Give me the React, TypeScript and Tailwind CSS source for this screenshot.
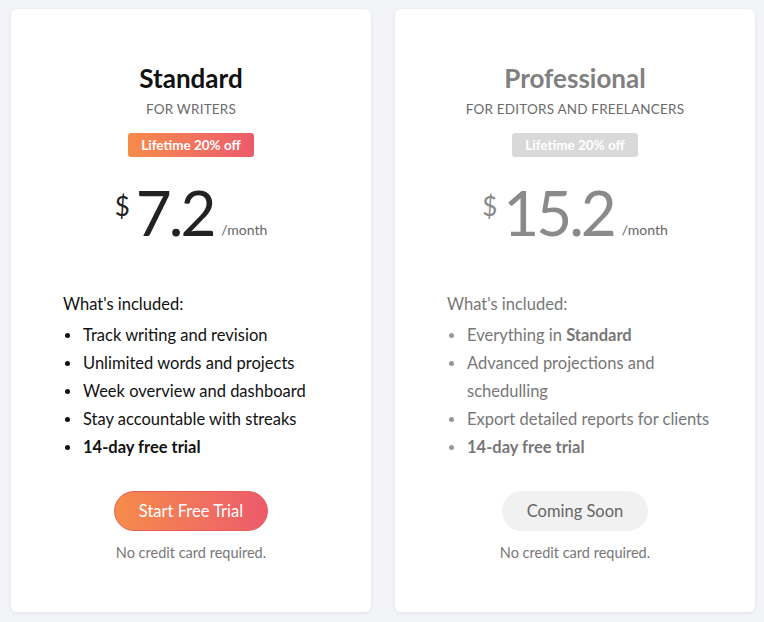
import React from 'react'

type Feature = { text: React.ReactNode; bold?: boolean }

type Plan = {
  name: string
  audience: string
  price: string
  features: Feature[]
  action: string
  active: boolean
}

const plans: Plan[] = [
  {
    name: 'Standard',
    audience: 'FOR WRITERS',
    price: '7.2',
    features: [
      { text: 'Track writing and revision' },
      { text: 'Unlimited words and projects' },
      { text: 'Week overview and dashboard' },
      { text: 'Stay accountable with streaks' },
      { text: '14-day free trial', bold: true },
    ],
    action: 'Start Free Trial',
    active: true,
  },
  {
    name: 'Professional',
    audience: 'FOR EDITORS AND FREELANCERS',
    price: '15.2',
    features: [
      {
        text: (
          <>
            Everything in <span className="font-bold">Standard</span>
          </>
        ),
      },
      { text: 'Advanced projections and schedulling' },
      { text: 'Export detailed reports for clients' },
      { text: '14-day free trial', bold: true },
    ],
    action: 'Coming Soon',
    active: false,
  },
]

const PlanCard: React.FC<{ plan: Plan }> = ({ plan }) => {
  const { active } = plan
  return (
    <div className="h-[603px] rounded-md bg-white shadow-[0_1px_4px_rgba(0,0,0,0.08)] flex flex-col items-center pt-[54px]">
      <h2 className={`text-[26px] leading-[30px] font-bold ${active ? 'text-[#111]' : 'text-[#808080]'}`}>
        {plan.name}
      </h2>
      <p className="mt-[6px] text-[13.5px] leading-[20px] text-[#6b6b6b] tracking-[0.2px]">{plan.audience}</p>
      <span
        className={`mt-[14px] h-[24px] w-[126px] rounded-[3px] flex items-center justify-center text-[13.5px] font-bold text-white ${
          active ? 'bg-gradient-to-r from-[#f68b48] to-[#ed5a6b]' : 'bg-[#d9d9d9]'
        }`}
      >
        Lifetime 20% off
      </span>
      <div className={`mt-[27px] flex items-start ${active ? 'text-[#222]' : 'text-[#8a8a8a]'}`}>
        <span className="text-[26px] leading-[24px] mt-[10px] mr-[6px]">$</span>
        <span className="text-[62px] leading-[56px] tracking-[-3px]">{plan.price}</span>
        <span className="ml-[8px] mt-[37px] text-[14px] leading-[18px] text-[#666]">/month</span>
      </div>

      <div className={`mt-[52px] self-stretch pl-[52px] pr-[40px] text-[16.5px] ${active ? 'text-[#111]' : 'text-[#777]'}`}>
        <p className="leading-[24px]">What's included:</p>
        <ul className="mt-[5px]">
          {plan.features.map((f, i) => (
            <li key={i} className="flex leading-[28px]">
              <span className={`mt-[12px] ml-[2px] mr-[13px] h-[5px] w-[5px] shrink-0 rounded-full ${active ? 'bg-[#111]' : 'bg-[#999]'}`} />
              <span className={f.bold ? 'font-bold' : ''}>{f.text}</span>
            </li>
          ))}
        </ul>
      </div>

      <button
        className={`mt-[30px] h-[40px] rounded-full text-[16.5px] ${
          active
            ? 'w-[154px] bg-gradient-to-r from-[#f68b48] to-[#ed5a6b] text-white border border-[#e8605a]'
            : 'w-[146px] bg-[#f1f1f1] text-[#666]'
        }`}
      >
        {plan.action}
      </button>
      <p className="mt-[12px] text-[14.5px] leading-[20px] text-[#777]">No credit card required.</p>
    </div>
  )
}

export default function App() {
  return (
    <div
      className="min-h-[622px] bg-[#f3f4f8] pl-[11px] pr-[9px] pt-[9px] grid grid-cols-2 gap-6 content-start"
      style={{ fontFamily: 'Lato, "Noto Sans", sans-serif' }}
    >
      {plans.map((p) => (
        <PlanCard key={p.name} plan={p} />
      ))}
    </div>
  )
}
